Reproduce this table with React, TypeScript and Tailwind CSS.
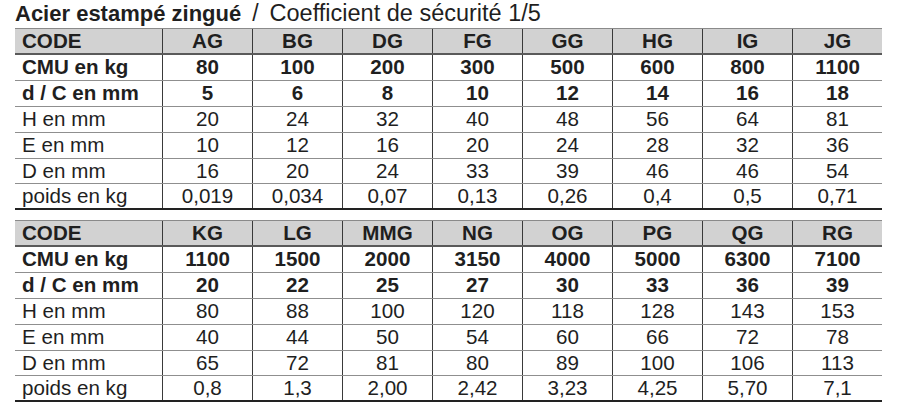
import React from "react";

type Row = { label: string; values: string[]; bold?: boolean };

const t1: Row[] = [
  { label: "CMU en kg", values: ["80", "100", "200", "300", "500", "600", "800", "1100"], bold: true },
  { label: "d / C en mm", values: ["5", "6", "8", "10", "12", "14", "16", "18"], bold: true },
  { label: "H en mm", values: ["20", "24", "32", "40", "48", "56", "64", "81"] },
  { label: "E en mm", values: ["10", "12", "16", "20", "24", "28", "32", "36"] },
  { label: "D en mm", values: ["16", "20", "24", "33", "39", "46", "46", "54"] },
  { label: "poids en kg", values: ["0,019", "0,034", "0,07", "0,13", "0,26", "0,4", "0,5", "0,71"] },
];
const h1 = ["AG", "BG", "DG", "FG", "GG", "HG", "IG", "JG"];

const t2: Row[] = [
  { label: "CMU en kg", values: ["1100", "1500", "2000", "3150", "4000", "5000", "6300", "7100"], bold: true },
  { label: "d / C en mm", values: ["20", "22", "25", "27", "30", "33", "36", "39"], bold: true },
  { label: "H en mm", values: ["80", "88", "100", "120", "118", "128", "143", "153"] },
  { label: "E en mm", values: ["40", "44", "50", "54", "60", "66", "72", "78"] },
  { label: "D en mm", values: ["65", "72", "81", "80", "89", "100", "106", "113"] },
  { label: "poids en kg", values: ["0,8", "1,3", "2,00", "2,42", "3,23", "4,25", "5,70", "7,1"] },
];
const h2 = ["KG", "LG", "MMG", "NG", "OG", "PG", "QG", "RG"];

const rowH = ["h-[26px]", "h-[26px]", "h-[26px]", "h-[26px]", "h-[25px]", "h-[26px]"];

function Table({ head, rows }: { head: string[]; rows: Row[] }) {
  return (
    <div className="w-[867px] border-t border-[#8a8a8a]">
      <div className="grid grid-cols-[147px_repeat(8,90px)] h-[26px] bg-[#d2d2d2] border-b-2 border-[#5a5a5a] font-bold">
        <div className="pl-[7px] leading-[24px]">CODE</div>
        {head.map((h) => (
          <div key={h} className="border-l border-[#3a3a3a] text-center leading-[24px]">
            {h}
          </div>
        ))}
      </div>
      {rows.map((r, i) => {
        const last = i === rows.length - 1;
        return (
          <div
            key={r.label}
            className={
              "grid grid-cols-[147px_repeat(8,90px)] " +
              rowH[i] +
              (last ? " border-b-2 border-[#222222]" : " border-b border-[#8f8f8f]") +
              (r.bold ? " font-bold" : "")
            }
          >
            <div className="pl-[7px] leading-[24px]">{r.label}</div>
            {r.values.map((v, j) => (
              <div key={j} className="border-l border-[#3a3a3a] text-center leading-[24px]">
                {v}
              </div>
            ))}
          </div>
        );
      })}
    </div>
  );
}

export default function App() {
  return (
    <div
      className="w-[900px] h-[412px] bg-white text-[#1f1f1f] text-[20.6px] pl-[15px] overflow-hidden"
      style={{ fontFamily: '"Liberation Sans", Arial, sans-serif' }}
    >
      <div className="h-[28px] leading-[27px] text-[22px] whitespace-nowrap">
        <span className="font-bold">Acier estampé zingué</span>
        <span className="ml-[11px] text-[23px]">/</span>
        <span className="ml-[11px] text-[23.5px]">Coefficient de sécurité 1/5</span>
      </div>
      <Table head={h1} rows={t1} />
      <div className="h-[10px]" />
      <Table head={h2} rows={t2} />
    </div>
  );
}
